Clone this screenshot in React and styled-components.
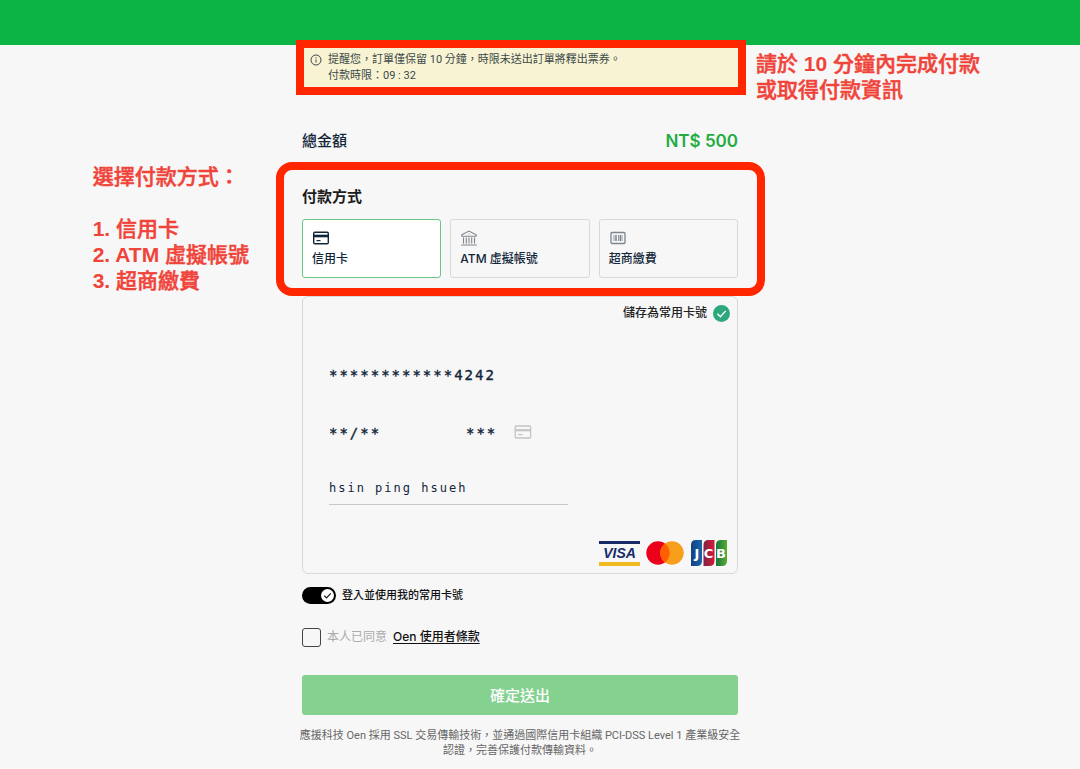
import React from "react";
import styled, { createGlobalStyle } from "styled-components";

const GlobalStyle = createGlobalStyle`
  *, *::before, *::after { box-sizing: border-box; }
  body {
    margin: 0;
    background: #f7f7f7;
    color: #12263a;
    font-family: "Inter", "Noto Sans CJK TC", sans-serif;
    font-size: 12px;
    line-height: 16px;
  }
`;

const smallFont = `"Roboto", "Noto Sans CJK TC", sans-serif`;

const TopBar = styled.header`
  height: 45px;
  background: #0cb445;
`;

const Main = styled.main`
  max-width: 476px;
  margin: 0 auto;
  padding: 3px 40px 8px 0;
`;

const Notice = styled.aside`
  position: relative;
  display: flex;
  gap: 6px;
  padding: 4px 8px 3px;
  background: #f8f3d2;
  color: #3c4a4a;
  font-family: ${smallFont};
  font-size: 11px;

  svg { margin-top: 2px; flex: none; }
  p { margin: 0; white-space: nowrap; }
`;

const Highlight = styled.div`
  position: absolute;
  inset: ${(p) => p.$inset};
  border: 8px solid #ff2600;
  border-radius: ${(p) => p.$radius || "0"};
  pointer-events: none;
`;

const Annotation = styled.div`
  position: absolute;
  top: ${(p) => p.$top};
  left: ${(p) => p.$left || "auto"};
  right: ${(p) => p.$right || "auto"};
  color: #f0443a;
  font-family: "Liberation Sans", "Noto Sans CJK TC", sans-serif;
  font-size: 21px;
  font-weight: 500;
  line-height: 26px;
  white-space: nowrap;

  p, ol { margin: 0; padding: 0; list-style: none; }
  ol { margin-top: 26px; }
  span { -webkit-text-stroke: 0.5px currentColor; }
`;

const TotalRow = styled.div`
  display: flex;
  justify-content: space-between;
  align-items: center;
  margin-top: 42px;
  height: 24px;
  font-size: 15px;
  font-weight: 500;
`;

const Amount = styled.strong`
  color: #22ac42;
  font-size: 17px;
  font-weight: 600;
`;

const MethodsSection = styled.section`
  position: relative;
  margin-top: 32px;
`;

const Methods = styled.fieldset`
  margin: 0;
  padding: 0;
  border: 0;
  min-width: 0;
`;

const MethodsTitle = styled.legend`
  padding: 0;
  margin-bottom: 10px;
  color: #1c1c1c;
  font-size: 15px;
  font-weight: 700;
  line-height: 24px;
`;

const MethodGrid = styled.div`
  display: grid;
  grid-template-columns: repeat(3, 1fr);
  gap: 9px;
`;

const MethodRadio = styled.input`
  position: absolute;
  opacity: 0;
  margin: 0;
`;

const MethodCard = styled.label`
  display: flex;
  flex-direction: column;
  gap: 4px;
  height: 59px;
  padding: 9px;
  border: 1px solid #d9d9d9;
  border-radius: 3px;
  color: #12263a;
  font-weight: 500;
  cursor: pointer;

  svg { color: #7b868f; }

  &:has(input:checked) {
    background: #fff;
    border-color: #6cc485;
  }
  &:has(input:checked) svg { color: #12263a; }
`;

const CardPanel = styled.section`
  display: flex;
  flex-direction: column;
  margin-top: 18px;
  padding: 7px 7px 6px 26px;
  border: 1px solid #d9d9d9;
  border-radius: 6px;
`;

const SaveRow = styled.label`
  display: flex;
  align-items: center;
  align-self: flex-end;
  gap: 6px;
  height: 18px;
  color: #222;
  font-weight: 500;
`;

const Tick = styled.span`
  display: grid;
  align-items: center;
  justify-items: end;

  > * { grid-area: 1 / 1; }
  svg { pointer-events: none; }
`;

const RoundCheck = styled.input`
  appearance: none;
  width: 17px;
  height: 17px;
  margin: 0;
  border-radius: 50%;
  background: #2da87d;
`;

const Field = styled.input`
  display: block;
  width: ${(p) => p.$width || "100%"};
  height: 24px;
  padding: 0;
  border: 0;
  outline: 0;
  background: transparent;
  color: #12263a;
  font-family: "DejaVu Sans Mono", "Liberation Mono", monospace;
  font-size: 14px;
  letter-spacing: 2px;
  -webkit-text-stroke: 0.4px currentColor;
`;

const NumberField = styled(Field)`
  margin-top: 41px;
`;

const NameField = styled(Field)`
  height: 29px;
  margin-top: 31px;
  padding-bottom: 4px;
  border-bottom: 1px solid #c8c8c8;
  font-size: 12px;
  -webkit-text-stroke: 0;
`;

const SplitRow = styled.div`
  display: flex;
  align-items: center;
  margin-top: 34px;
`;

const CvvGroup = styled.div`
  display: flex;
  align-items: center;
  gap: 4px;
  margin-left: 57px;
`;

const Logos = styled.div`
  display: flex;
  align-items: center;
  align-self: flex-end;
  gap: 6px;
  height: 28px;
  margin: 34px 2px 0 0;
`;

const SwitchRow = styled.label`
  display: flex;
  align-items: center;
  gap: 6px;
  height: 18px;
  margin-top: 12px;
  color: #111;
  font-size: 11px;
  font-weight: 500;
`;

const Switch = styled.input`
  appearance: none;
  width: 34px;
  height: 17px;
  margin: 0;
  border-radius: 9px;
  background: #000;
`;

const AgreeRow = styled.div`
  display: flex;
  align-items: center;
  gap: 6px;
  height: 20px;
  margin-top: 23px;

  label { color: #aaa; }
`;

const AgreeBox = styled.input`
  appearance: none;
  width: 19px;
  height: 19px;
  margin: 0;
  border: 1px solid #444;
  border-radius: 3px;
`;

const TermsLink = styled.a`
  color: #111;
  font-weight: 500;
  text-decoration: underline;
  text-underline-offset: 2px;
`;

const Submit = styled.button`
  display: block;
  width: 100%;
  height: 40px;
  margin-top: 28px;
  padding: 0 0 2px;
  border: 0;
  border-radius: 3px;
  background: #84d190;
  color: #fff;
  font-family: inherit;
  font-size: 15px;
  font-weight: 500;
`;

const Footnote = styled.p`
  margin: 13px -4px 0;
  color: #666;
  font-family: ${smallFont};
  font-size: 11px;
  line-height: 15px;
  text-align: center;
`;

const InfoIcon = () => (
  <svg width="12" height="12" viewBox="0 0 12 12" fill="none" stroke="currentColor" aria-hidden="true">
    <circle cx="6" cy="6" r="5" />
    <path d="M6 5.4v3.1M6 3.3v1.1" />
  </svg>
);

const CreditIcon = () => (
  <svg width="18" height="18" viewBox="0 0 18 18" fill="none" stroke="currentColor" strokeWidth="1.4" aria-hidden="true">
    <rect x="1.7" y="3.2" width="14.6" height="11.6" rx="1.2" />
    <path d="M1.7 7h14.6" strokeWidth="2.6" />
    <path d="M4.5 11.6h4" strokeWidth="1.2" />
  </svg>
);

const BankIcon = () => (
  <svg width="18" height="18" viewBox="0 0 18 18" fill="none" stroke="currentColor" aria-hidden="true">
    <path d="M1.8 5.8 9 2l7.2 3.8v1.4H1.8zM3.5 8.5v6M6.3 8.5v6M9 8.5v6M11.7 8.5v6M14.5 8.5v6M1.2 16h15.6" strokeWidth="1.1" />
    <circle cx="9" cy="5" r=".6" fill="currentColor" stroke="none" />
  </svg>
);

const BarcodeIcon = () => (
  <svg width="18" height="18" viewBox="0 0 18 18" fill="none" stroke="currentColor" aria-hidden="true">
    <rect x="2" y="3.5" width="14" height="11" rx="1" strokeWidth="1.3" />
    <path d="M5 6v6M9.5 6v6M13 6v6" strokeWidth=".8" />
    <path d="M7 6v6M11.3 6v6" strokeWidth="1.5" />
  </svg>
);

const CheckIcon = ({ size, box }) => (
  <svg width={size} height={size} viewBox="0 0 17 17" fill="none" aria-hidden="true">
    {box && <circle cx="8.5" cy="8.5" r="6.5" fill="#fff" />}
    <path
      d={box ? "m5.2 8.7 2.3 2.3 4.3-4.6" : "m4.4 8.8 3 3 5.3-5.9"}
      stroke={box ? "#111" : "#fff"}
      strokeWidth={box ? 1.1 : 1.4}
    />
  </svg>
);

const VisaLogo = () => (
  <svg width="41" height="26" viewBox="0 0 41 26" role="img" aria-label="Visa">
    <path fill="#182b68" d="M0 1h41v3H0z" />
    <path fill="#efb920" d="M0 22h41v4H0z" />
    <text x="20.5" y="18" textAnchor="middle" fontFamily="Liberation Sans, sans-serif" fontStyle="italic" fontWeight="700" fontSize="14" fill="#182b68">
      VISA
    </text>
  </svg>
);

const MastercardLogo = () => (
  <svg width="38" height="24" viewBox="0 0 38 24" role="img" aria-label="Mastercard">
    <circle cx="12" cy="12" r="11.7" fill="#eb001b" />
    <circle cx="26" cy="12" r="11.7" fill="#f79e1b" />
    <path fill="#ff5f00" d="M19 2.6a11.7 11.7 0 0 1 0 18.8 11.7 11.7 0 0 1 0-18.8z" />
  </svg>
);

const JcbLogo = () => (
  <svg width="38" height="28" viewBox="0 0 38 28" role="img" aria-label="JCB">
    <defs>
      <linearGradient id="jcbBlue"><stop stopColor="#173f80" /><stop offset="1" stopColor="#1665ae" /></linearGradient>
      <linearGradient id="jcbRed"><stop stopColor="#7c2446" /><stop offset="1" stopColor="#d81935" /></linearGradient>
      <linearGradient id="jcbGreen"><stop stopColor="#18743b" /><stop offset="1" stopColor="#57ad32" /></linearGradient>
    </defs>
    <path fill="url(#jcbBlue)" d="M6 1h6v21q0 5-5 5H1V6q0-5 5-5z" />
    <path fill="url(#jcbRed)" d="M18.500 1h6v21q0 5-5 5h-6V6q0-5 5-5z" />
    <path fill="url(#jcbGreen)" d="M31 1h6v21q0 5-5 5h-6V6q0-5 5-5z" />
    <g textAnchor="middle" fontFamily="DejaVu Sans, sans-serif" fontWeight="700" fontSize="13" fill="#fff">
      <text x="7" y="18.5">J</text>
      <text x="18.500" y="18.5">C</text>
      <text x="31" y="18.5">B</text>
    </g>
  </svg>
);

const METHODS = [
  { id: "credit", label: "信用卡", Icon: CreditIcon },
  { id: "atm", label: "ATM 虛擬帳號", Icon: BankIcon },
  { id: "store", label: "超商繳費", Icon: BarcodeIcon },
];

export default function App() {
  return (
    <>
      <GlobalStyle />
      <TopBar />
      <Main lang="zh-Hant">
        <Notice>
          <InfoIcon />
          <div>
            <p>提醒您，訂單僅保留 10 分鐘，時限未送出訂單將釋出票券。</p>
            <p>付款時限：09 : 32</p>
          </div>
          <Highlight $inset="-8px -8px -8px -6px" />
          <Annotation $top="3px" $left="calc(100% + 18px)">
            <p><span>請於</span> <b>10</b> <span>分鐘內完成付款</span></p>
            <p><span>或取得付款資訊</span></p>
          </Annotation>
        </Notice>

        <TotalRow>
          <span>總金額</span>
          <Amount>NT$ 500</Amount>
        </TotalRow>

        <MethodsSection>
          <Methods>
            <MethodsTitle>付款方式</MethodsTitle>
            <MethodGrid>
              {METHODS.map(({ id, label, Icon }, i) => (
                <MethodCard key={id}>
                  <MethodRadio type="radio" name="method" value={id} defaultChecked={i === 0} />
                  <Icon />
                  {label}
                </MethodCard>
              ))}
            </MethodGrid>
          </Methods>
          <Highlight $inset="-23px -27px -18px -26px" $radius="16px" />
          <Annotation $top="-21px" $right="calc(100% + 53px)">
            <p><span>選擇付款方式：</span></p>
            <ol>
              <li><b>1.</b> <span>信用卡</span></li>
              <li><b>2. ATM</b> <span>虛擬帳號</span></li>
              <li><b>3.</b> <span>超商繳費</span></li>
            </ol>
          </Annotation>
        </MethodsSection>

        <CardPanel>
          <SaveRow>
            儲存為常用卡號
            <Tick>
              <RoundCheck type="checkbox" defaultChecked />
              <CheckIcon size={17} />
            </Tick>
          </SaveRow>
          <NumberField $width="240px" aria-label="卡號" defaultValue="************4242" />
          <SplitRow>
            <Field $width="80px" aria-label="有效期限" defaultValue="**/**" />
            <CvvGroup>
              <Field $width="44px" aria-label="安全碼" defaultValue="***" />
              <svg width="18" height="18" viewBox="0 0 18 18" fill="none" stroke="#c4c4c4" strokeWidth="1.3" aria-hidden="true">
                <rect x="1.2" y="2" width="15.4" height="12" rx="1" />
                <path d="M1.2 6.2h15.4" strokeWidth="2.2" />
                <path d="M4.2 10.6h4.5" />
              </svg>
            </CvvGroup>
          </SplitRow>
          <NameField $width="239px" aria-label="持卡人姓名" defaultValue="hsin ping hsueh" />
          <Logos>
            <VisaLogo />
            <MastercardLogo />
            <JcbLogo />
          </Logos>
        </CardPanel>

        <SwitchRow>
          <Tick>
            <Switch type="checkbox" role="switch" defaultChecked />
            <CheckIcon size={17} box />
          </Tick>
          登入並使用我的常用卡號
        </SwitchRow>

        <AgreeRow>
          <AgreeBox type="checkbox" id="agree" />
          <label htmlFor="agree">本人已同意</label>
          <TermsLink href="#terms">Oen 使用者條款</TermsLink>
        </AgreeRow>

        <Submit type="button">確定送出</Submit>

        <Footnote>
          應援科技 Oen 採用 SSL 交易傳輸技術，並通過國際信用卡組織 PCI-DSS Level 1 產業級安全認證，完善保護付款傳輸資料。
        </Footnote>
      </Main>
    </>
  );
}
